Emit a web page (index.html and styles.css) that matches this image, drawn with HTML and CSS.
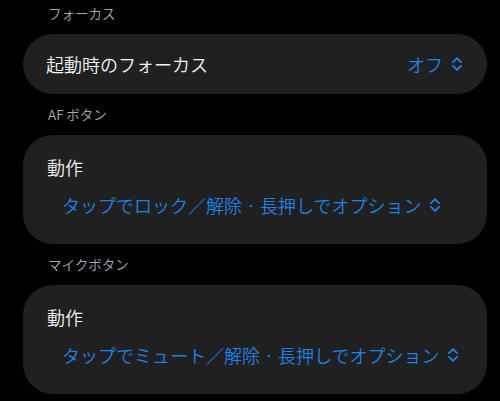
FILE: index.html
```html
<!DOCTYPE html>
<html lang="ja">
<head>
<meta charset="utf-8">
<link rel="stylesheet" href="styles.css">
</head>
<body>
<div class="page">
  <div class="label first">フォーカス</div>
  <div class="card row">
    <span class="title">起動時のフォーカス</span>
    <span class="value">オフ<svg class="chev" viewBox="0 0 10 14" width="10" height="14"><polyline points="1,5.2 5,1.2 9,5.2"/><polyline points="1,8.8 5,12.8 9,8.8"/></svg></span>
  </div>
  <div class="label">AF&thinsp;ボタン</div>
  <div class="card col">
    <span class="title">動作</span>
    <span class="value sub">タップでロック／解除 · 長押しでオプション<svg class="chev" viewBox="0 0 10 14" width="10" height="14"><polyline points="1,5.2 5,1.2 9,5.2"/><polyline points="1,8.8 5,12.8 9,8.8"/></svg></span>
  </div>
  <div class="label">マイクボタン</div>
  <div class="card col">
    <span class="title">動作</span>
    <span class="value sub">タップでミュート／解除 · 長押しでオプション<svg class="chev" viewBox="0 0 10 14" width="10" height="14"><polyline points="1,5.2 5,1.2 9,5.2"/><polyline points="1,8.8 5,12.8 9,8.8"/></svg></span>
  </div>
</div>
</body>
</html>
```

FILE: styles.css
```css
html, body {
  margin: 0;
  padding: 0;
  background: #000;
}
body {
  font-family: "Noto Sans CJK JP", "Noto Sans", sans-serif;
  font-weight: 350;
  color: #f2f2f2;
  overflow: hidden;
}
.page {
  padding: 0 13px 0 23px;
}
.label {
  font-size: 13.5px;
  line-height: 20px;
  color: #ababab;
  padding: 10px 0 11px 25px;
}
.label.first {
  padding-top: 3px;
}
.card {
  background: #202020;
  border-radius: 30px;
}
.row {
  height: 60px;
  display: flex;
  align-items: center;
  justify-content: space-between;
  padding: 0 25px 0 23px;
  box-sizing: border-box;
}
.col {
  height: 109px;
  box-sizing: border-box;
  display: flex;
  flex-direction: column;
  align-items: flex-start;
  padding: 20px 24px 0 24px;
  gap: 14px;
}
.title {
  font-size: 18px;
  line-height: 24px;
  color: #f4f4f4;
}
.value {
  font-size: 18px;
  line-height: 24px;
  color: #1f80e8;
  display: flex;
  align-items: center;
}
.sub {
  padding-left: 15px;
}
.chev {
  margin-left: 9px;
  fill: none;
  stroke: #1f80e8;
  stroke-width: 1.8;
  stroke-linecap: round;
  stroke-linejoin: round;
}
```
